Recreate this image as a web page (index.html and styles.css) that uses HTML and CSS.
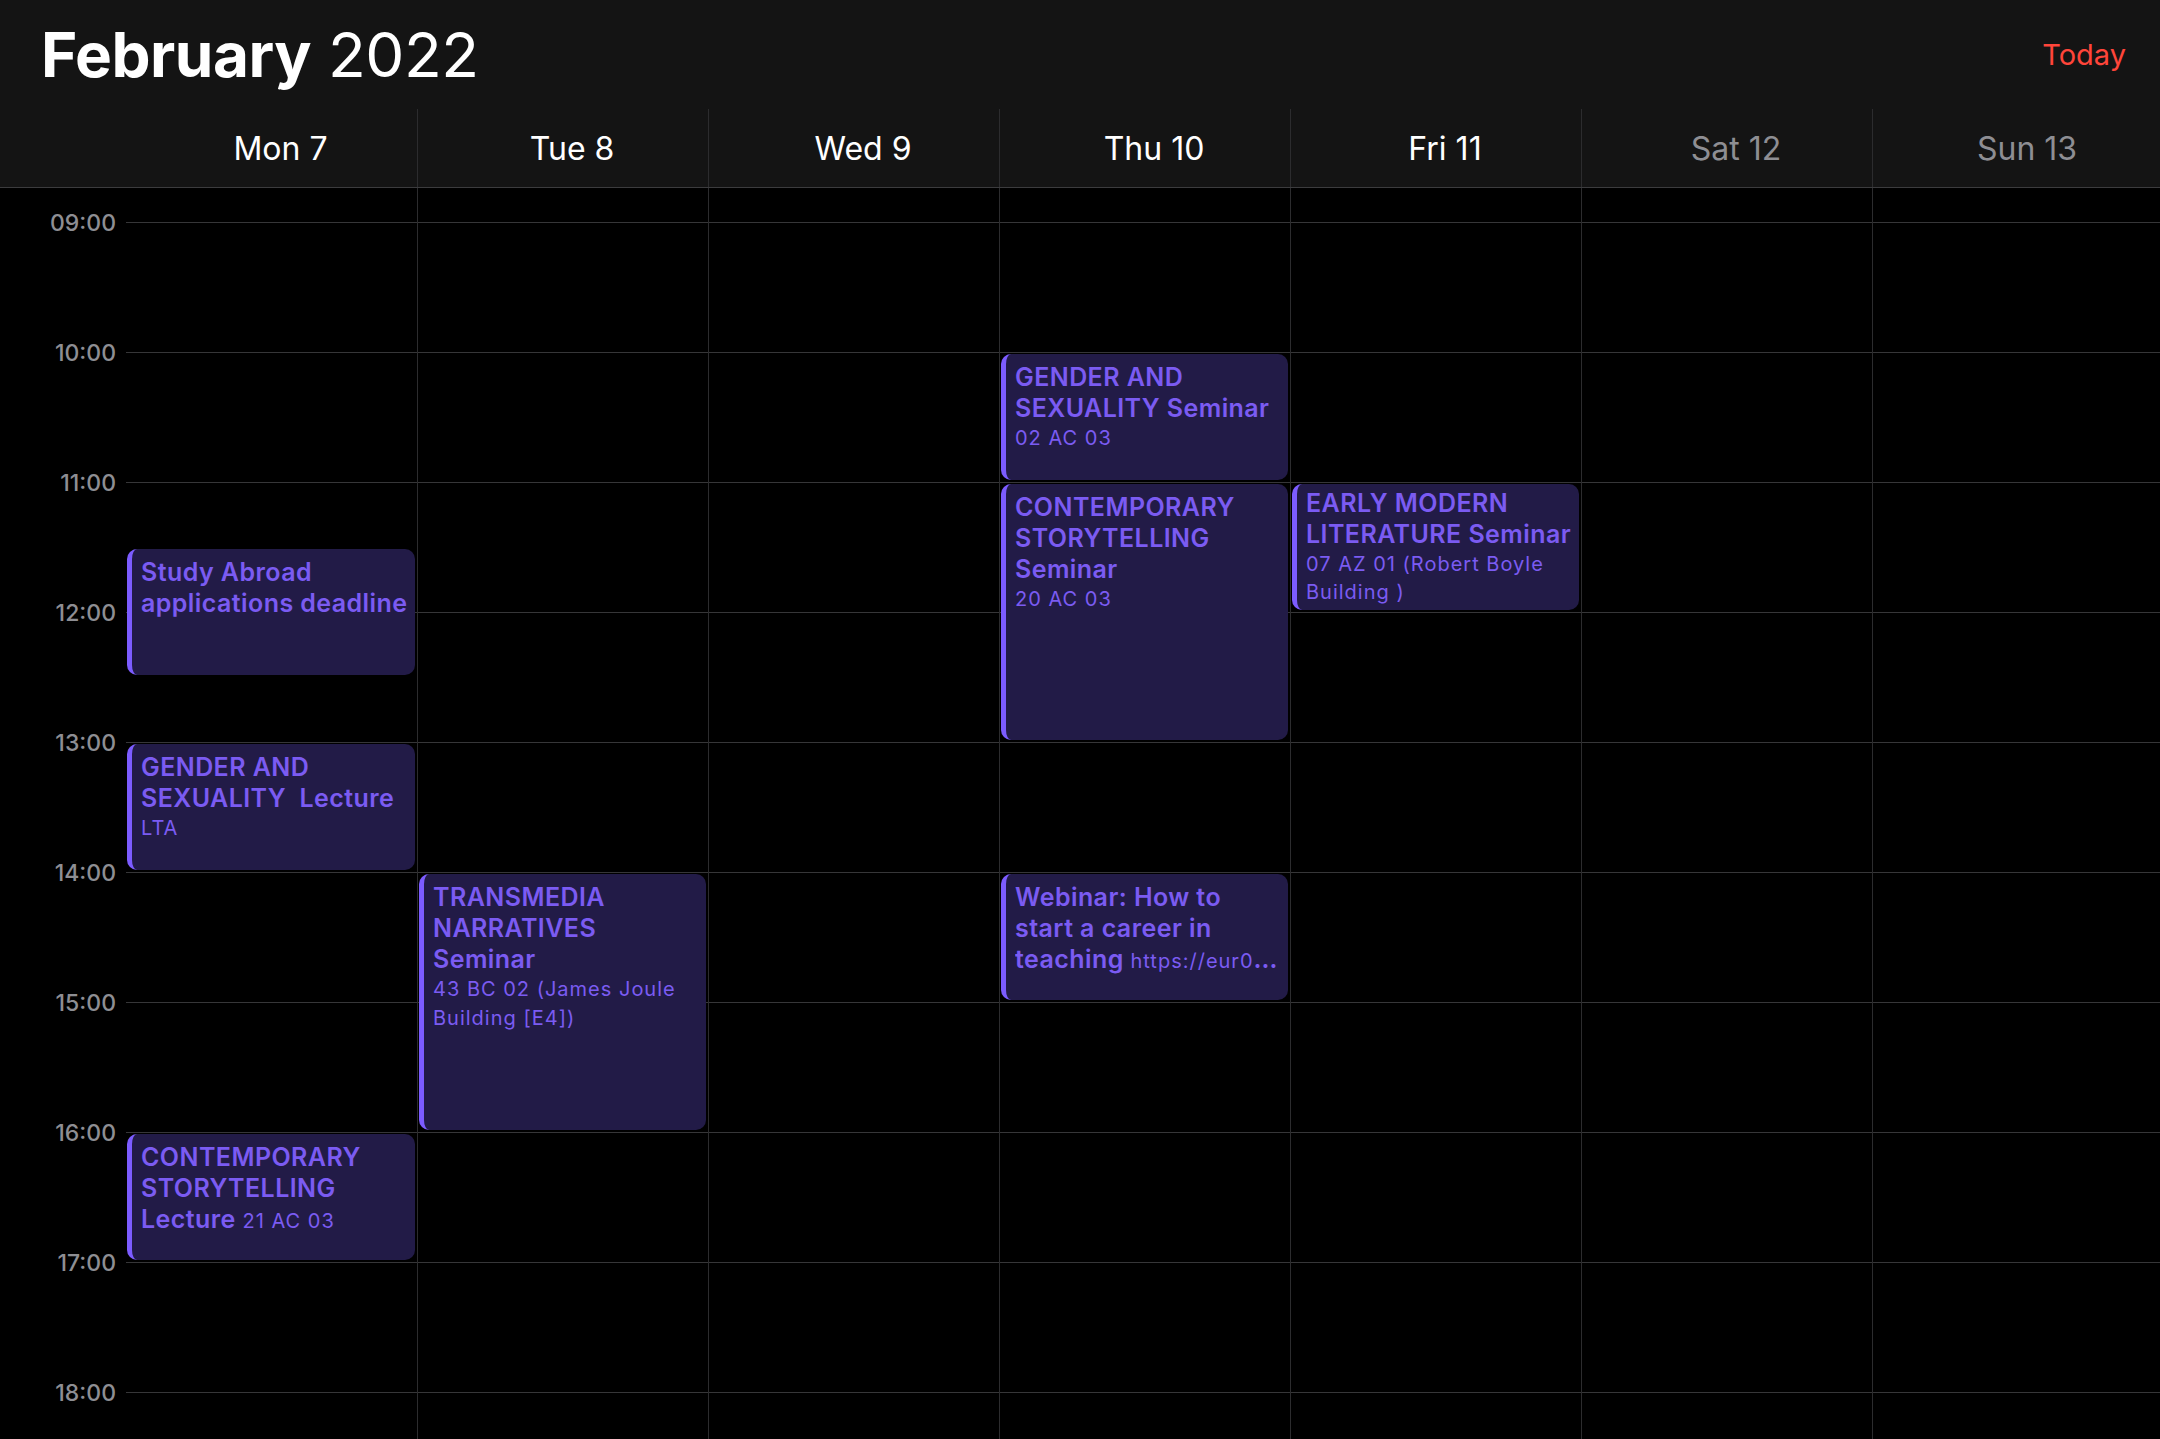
FILE: index.html
```html
<!DOCTYPE html>
<html lang="en">

<head>
    <meta charset="UTF-8">
    <meta name="viewport" content="width=device-width, initial-scale=1.0">
    <title>Calendar - Week</title>
    <link rel="stylesheet" href="styles.css">
</head>

<body>

    <div class="topbar">
        <h1 class="month"><b>February</b> 2022</h1>
        <span class="today">Today</span>
    </div>

    <div class="days">
        <div class="corner"></div>
        <div class="day">Mon 7</div>
        <div class="day">Tue 8</div>
        <div class="day">Wed 9</div>
        <div class="day">Thu 10</div>
        <div class="day">Fri 11</div>
        <div class="day weekend">Sat 12</div>
        <div class="day weekend">Sun 13</div>
    </div>

    <div class="week">
        <div class="times">
            <div class="time">09:00</div>
            <div class="time">10:00</div>
            <div class="time">11:00</div>
            <div class="time">12:00</div>
            <div class="time">13:00</div>
            <div class="time">14:00</div>
            <div class="time">15:00</div>
            <div class="time">16:00</div>
            <div class="time">17:00</div>
            <div class="time">18:00</div>
        </div>

        <!-- top = 34 + (start - 9) * 130 + 2, height = hours * 130 - 4 -->
        <div class="col">
            <div class="event" style="top: 361px; height: 126px;">
                <div class="title">Study Abroad applications deadline</div>
            </div>
            <div class="event" style="top: 556px; height: 126px;">
                <div class="title">GENDER AND SEXUALITY&nbsp; Lecture</div>
                <div class="place">LTA</div>
            </div>
            <div class="event" style="top: 946px; height: 126px;">
                <div class="title">CONTEMPORARY STORYTELLING Lecture <span class="place">21 AC 03</span></div>
            </div>
        </div>

        <div class="col">
            <div class="event" style="top: 686px; height: 256px;">
                <div class="title">TRANSMEDIA NARRATIVES Seminar</div>
                <div class="place">43 BC 02 (James Joule Building [E4])</div>
            </div>
        </div>

        <div class="col"></div>

        <div class="col">
            <div class="event" style="top: 166px; height: 126px;">
                <div class="title">GENDER AND SEXUALITY Seminar</div>
                <div class="place">02 AC 03</div>
            </div>
            <div class="event" style="top: 296px; height: 256px;">
                <div class="title">CONTEMPORARY STORYTELLING Seminar</div>
                <div class="place">20 AC 03</div>
            </div>
            <div class="event" style="top: 686px; height: 126px;">
                <div class="title clamp">Webinar: How to start a career in teaching <span class="place url">https://eur02.safelinks.protection.outlook.com/?url=https%3A%2F%2Fzoom.us%2Fj%2F9421</span></div>
            </div>
        </div>

        <div class="col">
            <div class="event tight" style="top: 296px; height: 126px;">
                <div class="title">EARLY MODERN LITERATURE Seminar</div>
                <div class="place">07 AZ 01 (Robert Boyle Building )</div>
            </div>
        </div>

        <div class="col"></div>
        <div class="col"></div>
    </div>

</body>

</html>
```

FILE: styles.css
```css
* {
    box-sizing: border-box;
}

body {
    margin: 0;
    height: 100vh;
    overflow: hidden;
    display: flex;
    flex-direction: column;
    background-color: #000;
    color: #fff;
    font-family: Inter, "Noto Sans", sans-serif;
}

.topbar {
    height: 109px;
    flex-shrink: 0;
    background-color: #141414;
    display: flex;
    align-items: center;
    justify-content: space-between;
    padding: 0 34px 0 41px;
}

.month {
    margin: 0;
    font-size: 62px;
    font-weight: 400;
    letter-spacing: -0.5px;
}

.month b {
    font-weight: 700;
}

.today {
    color: #ff453a;
    font-size: 29px;
}

.days {
    height: 79px;
    flex-shrink: 0;
    background-color: #141414;
    display: grid;
    grid-template-columns: 126px repeat(7, 291px);
    border-bottom: 1px solid #3c3c3e;
}

.day {
    display: flex;
    align-items: center;
    justify-content: center;
    padding-left: 18px;
    font-size: 32px;
    border-left: 1px solid #2c2c2e;
}

.corner + .day {
    border-left: none;
}

.day.weekend {
    color: #8e8e93;
}

.week {
    flex: 1;
    display: grid;
    grid-template-columns: 126px repeat(7, 291px);
}

.times {
    padding-top: 22px;
}

.time {
    height: 130px;
    line-height: 26px;
    text-align: right;
    padding-right: 10px;
    font-size: 23px;
    font-weight: 500;
    color: #8e8e93;
}

.col {
    position: relative;
    border-left: 1px solid #2c2c2e;
    /* hour lines, first one at 09:00 */
    background-image: linear-gradient(#363638 1px, transparent 1px);
    background-size: 100% 130px;
    background-position: 0 34px;
}

.times + .col {
    border-left: none;
}

.event {
    position: absolute;
    left: 1px;
    right: 2px;
    overflow: hidden;
    padding: 8px 5px 0 9px;
    background-color: #221b47;
    border-left: 5px solid #7c5cff;
    border-radius: 10px;
    color: #7b5bf2;
}

.title {
    font-size: 25px;
    font-weight: 600;
    line-height: 31px;
    letter-spacing: 0.43px;
}

.place {
    font-size: 20px;
    font-weight: 400;
    line-height: 29px;
    letter-spacing: 1px;
}

.title .place {
    line-height: 31px;
}

.clamp {
    display: -webkit-box;
    -webkit-line-clamp: 3;
    -webkit-box-orient: vertical;
    overflow: hidden;
}

.url {
    word-break: break-all;
}

.tight {
    padding-top: 4px;
}

.tight .place {
    line-height: 28px;
}
```
